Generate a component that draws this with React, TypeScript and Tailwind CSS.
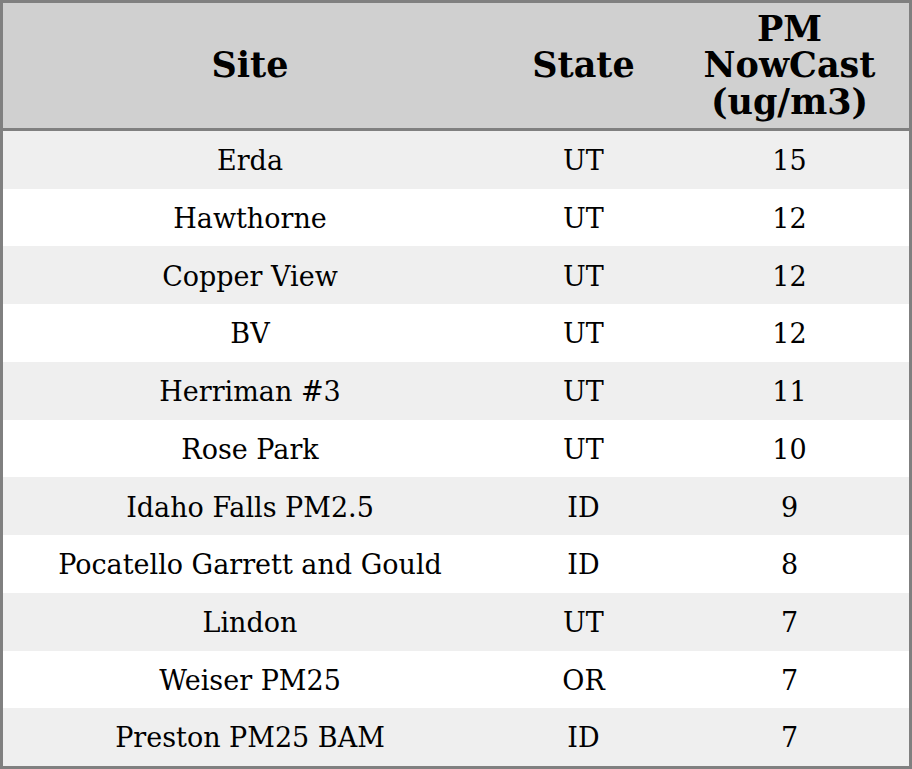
const rows = [
  ['Erda', 'UT', '15'],
  ['Hawthorne', 'UT', '12'],
  ['Copper View', 'UT', '12'],
  ['BV', 'UT', '12'],
  ['Herriman #3', 'UT', '11'],
  ['Rose Park', 'UT', '10'],
  ['Idaho Falls PM2.5', 'ID', '9'],
  ['Pocatello Garrett and Gould', 'ID', '8'],
  ['Lindon', 'UT', '7'],
  ['Weiser PM25', 'OR', '7'],
  ['Preston PM25 BAM', 'ID', '7'],
];

export default function App() {
  return (
    <div className="w-[912px] h-[769px] bg-white" style={{ fontFamily: '"DejaVu Serif", serif' }}>
      <div className="flex flex-col h-full border-[3px] border-[#808080] text-black">
        <div className="flex h-[128px] shrink-0 bg-[#d0d0d0] border-b-[3px] border-[#808080] font-bold text-[35px] leading-[36.5px]">
          <div className="w-[494px] flex items-center justify-center">Site</div>
          <div className="w-[173px] flex items-center justify-center">State</div>
          <div className="flex-1 flex items-center justify-center text-center">
            PM<br />NowCast<br />(ug/m3)
          </div>
        </div>
        <div className="flex-1 flex flex-col text-[27px]">
          {rows.map((r, i) => (
            <div key={i} className={`flex-1 flex items-center pt-[3px] ${i % 2 === 0 ? 'bg-[#efefef]' : 'bg-white'}`}>
              <div className="w-[494px] text-center">{r[0]}</div>
              <div className="w-[173px] text-center">{r[1]}</div>
              <div className="flex-1 text-center">{r[2]}</div>
            </div>
          ))}
        </div>
      </div>
    </div>
  );
}
